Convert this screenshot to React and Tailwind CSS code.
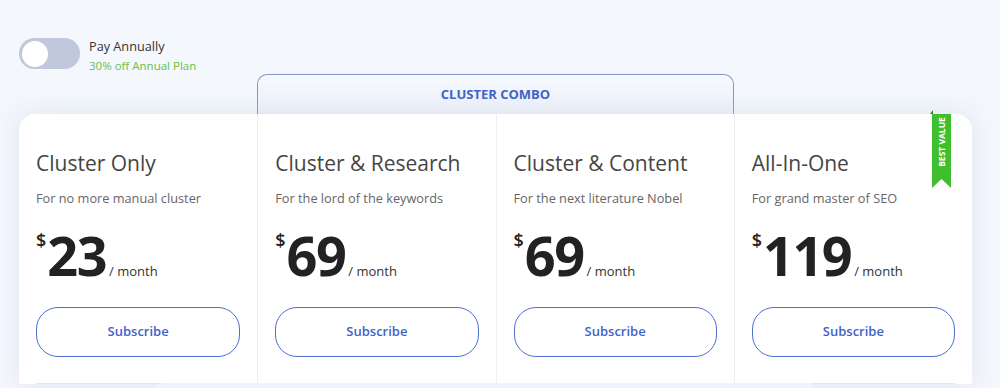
const plans = [
  { name: "Cluster Only", desc: "For no more manual cluster", price: "23" },
  { name: "Cluster & Research", desc: "For the lord of the keywords", price: "69" },
  { name: "Cluster & Content", desc: "For the next literature Nobel", price: "69" },
  { name: "All-In-One", desc: "For grand master of SEO", price: "119", best: true },
];

function Ribbon() {
  return (
    <div className="absolute right-[21px] top-[-4px] w-[21px]">
      <svg width="21" height="78" viewBox="0 0 21 78" className="block">
        <path d="M0 4 L3 0 L3 4 Z" fill="#2e8a1f" />
        <path d="M2 4 H21 V78 L11.5 69 L2 78 Z" fill="#3fbf2e" />
      </svg>
      <span className="absolute left-[12px] top-[32px] -translate-x-1/2 -translate-y-1/2 -rotate-90 whitespace-nowrap text-[8.5px] font-bold text-white">
        BEST VALUE
      </span>
    </div>
  );
}

function PlanColumn({ plan, first }) {
  return (
    <div className={`relative flex flex-col px-[17px] pt-[34px] ${first ? "" : "border-l border-[#eceff4]"}`}>
      {plan.best && <Ribbon />}
      <h3 className="text-[21px] leading-[30px] text-[#454545]">{plan.name}</h3>
      <p className="mt-[11px] text-[12.75px] leading-[18px] text-[#666]">{plan.desc}</p>
      <div className="mt-[21px] flex items-end">
        <span className="self-start mt-[3px] text-[18px] font-semibold leading-none text-[#222]">$</span>
        <span className="ml-[1px] text-[54px] font-bold leading-[54px] tracking-[-1.5px] text-[#222]">
          {plan.price}
        </span>
        <span className="mb-[1px] ml-[3px] text-[13px] text-[#333]">/ month</span>
      </div>
      <button className="mt-[25px] h-[50px] w-full rounded-[22px] border-[1.5px] border-[#4a70d0] text-[13px] font-semibold text-[#3d63c8]">
        Subscribe
      </button>
      <div className="mt-[26px] border-t border-[#e3e7ee]" />
    </div>
  );
}

export default function App() {
  return (
    <div
      className="relative h-[388px] w-[1000px] overflow-hidden bg-[#f4f7fc]"
      style={{ fontFamily: "'Open Sans', 'Noto Sans', sans-serif" }}
    >
      <div className="flex items-start gap-[9px] pl-[19px] pt-[38px]">
        <div className="flex h-[31px] w-[61px] items-center rounded-full bg-[#c1c8dc] px-[3px]">
          <div className="h-[26px] w-[26px] rounded-full bg-white" />
        </div>
        <div className="flex flex-col">
          <span className="text-[12.7px] leading-[16px] text-[#333]">Pay Annually</span>
          <span className="mt-[4px] text-[11.5px] leading-[15px] text-[#6cc04a]">30% off Annual Plan</span>
        </div>
      </div>

      <div className="ml-[257px] mt-[1px] flex h-[40px] w-[477px] items-center justify-center rounded-t-[10px] border border-b-0 border-[#8298c8] bg-gradient-to-b from-[#f6f9fe] to-[#edf1f9]">
        <span className="text-[13px] font-bold text-[#3d63c8]">CLUSTER COMBO</span>
      </div>

      <div className="relative mx-[19px] w-[953px] rounded-t-[16px] bg-white shadow-[0_0_24px_rgba(180,195,225,0.35)]">
        <div className="grid grid-cols-4">
          {plans.map((p, i) => (
            <PlanColumn key={p.name} plan={p} first={i === 0} />
          ))}
        </div>
        <div className="absolute left-[137px] top-[269px] h-[10px] w-[659px] rounded-t-[6px] bg-[#eef3fd]" />
      </div>
    </div>
  );
}
